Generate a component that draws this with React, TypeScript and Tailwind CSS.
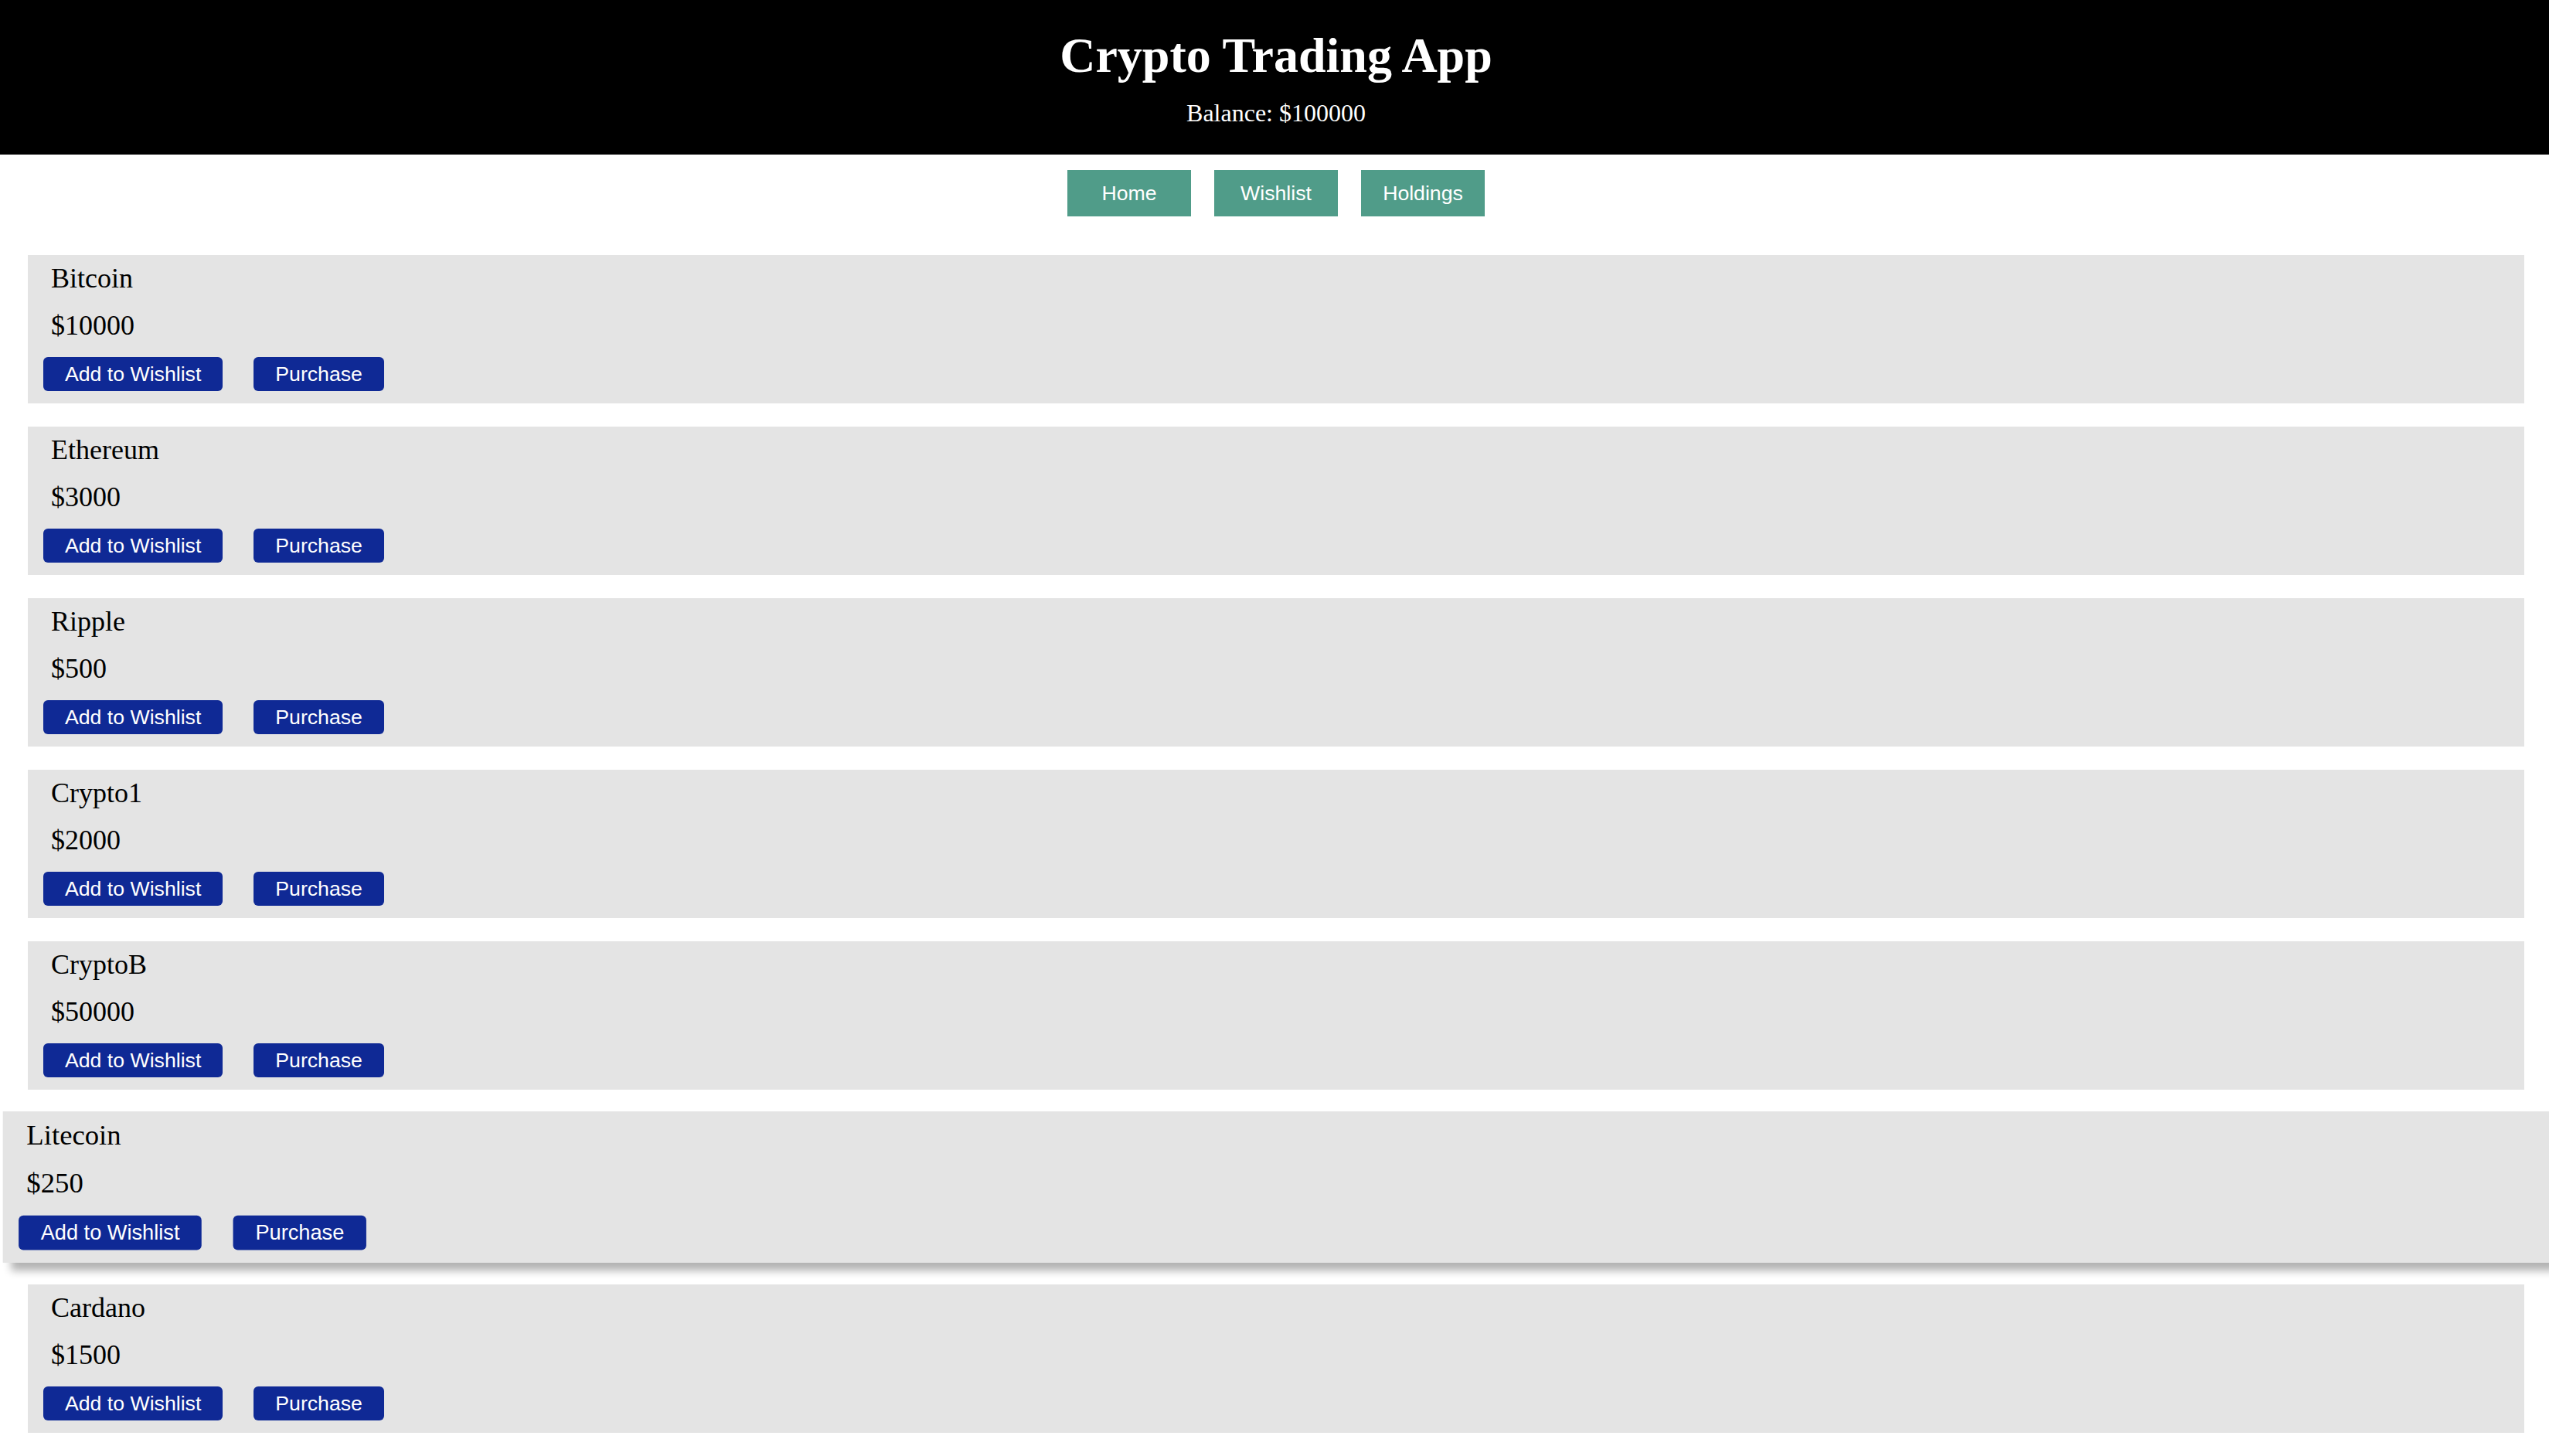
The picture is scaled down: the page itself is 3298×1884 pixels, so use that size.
const CRYPTOS = [
  { name: 'Bitcoin', price: 10000 },
  { name: 'Ethereum', price: 3000 },
  { name: 'Ripple', price: 500 },
  { name: 'Crypto1', price: 2000 },
  { name: 'CryptoB', price: 50000 },
  { name: 'Litecoin', price: 250, hovered: true },
  { name: 'Cardano', price: 1500 },
]

const NAV = ['Home', 'Wishlist', 'Holdings']

function CryptoCard({ name, price, hovered }: { name: string; price: number; hovered?: boolean }) {
  return (
    <div
      className={
        hovered
          ? 'relative z-10 bg-[#e4e4e4] pt-[9px] pb-[16px] scale-[1.02] shadow-[10px_11px_10px_rgba(0,0,0,0.3)]'
          : 'bg-[#e4e4e4] pt-[9px] pb-[16px]'
      }
    >
      <h3 className="pl-[30px] text-[36px] leading-[42px] font-normal text-black">{name}</h3>
      <p className="pl-[30px] mt-[19px] text-[36px] leading-[42px] text-black">${price}</p>
      <div className="mt-[20px] flex gap-[40px] pl-[20px]">
        <button className="h-[44px] px-[28px] rounded-[6px] bg-[#0f2995] text-white text-[26.67px] leading-none font-['Liberation_Sans',Arial,sans-serif]">
          Add to Wishlist
        </button>
        <button className="h-[44px] px-[28px] rounded-[6px] bg-[#0f2995] text-white text-[26.67px] leading-none font-['Liberation_Sans',Arial,sans-serif]">
          Purchase
        </button>
      </div>
    </div>
  )
}

export default function App() {
  return (
    <div className="min-h-screen bg-white overflow-x-hidden font-['Liberation_Serif','Times_New_Roman',serif]">
      {/* header */}
      <header className="bg-black pt-[36px] pb-[36px] pl-[4px] text-center text-white">
        <h1 className="text-[64px] leading-[72px] font-bold">Crypto Trading App</h1>
        <p className="mt-[20px] text-[32px] leading-[36px]">Balance: $100000</p>
      </header>

      {/* nav */}
      <nav className="mt-[20px] pl-[4px] flex justify-center gap-[30px]">
        {NAV.map((item) => (
          <button
            key={item}
            className="w-[160px] h-[60px] bg-[#509c89] text-white text-[26.67px] leading-none font-['Liberation_Sans',Arial,sans-serif]"
          >
            {item}
          </button>
        ))}
      </nav>

      {/* coin list */}
      <div className="mt-[50px] pl-[36px] pr-[32px] flex flex-col gap-[30px] pb-[30px]">
        {CRYPTOS.map((c) => (
          <CryptoCard key={c.name} name={c.name} price={c.price} hovered={c.hovered} />
        ))}
      </div>
    </div>
  )
}
